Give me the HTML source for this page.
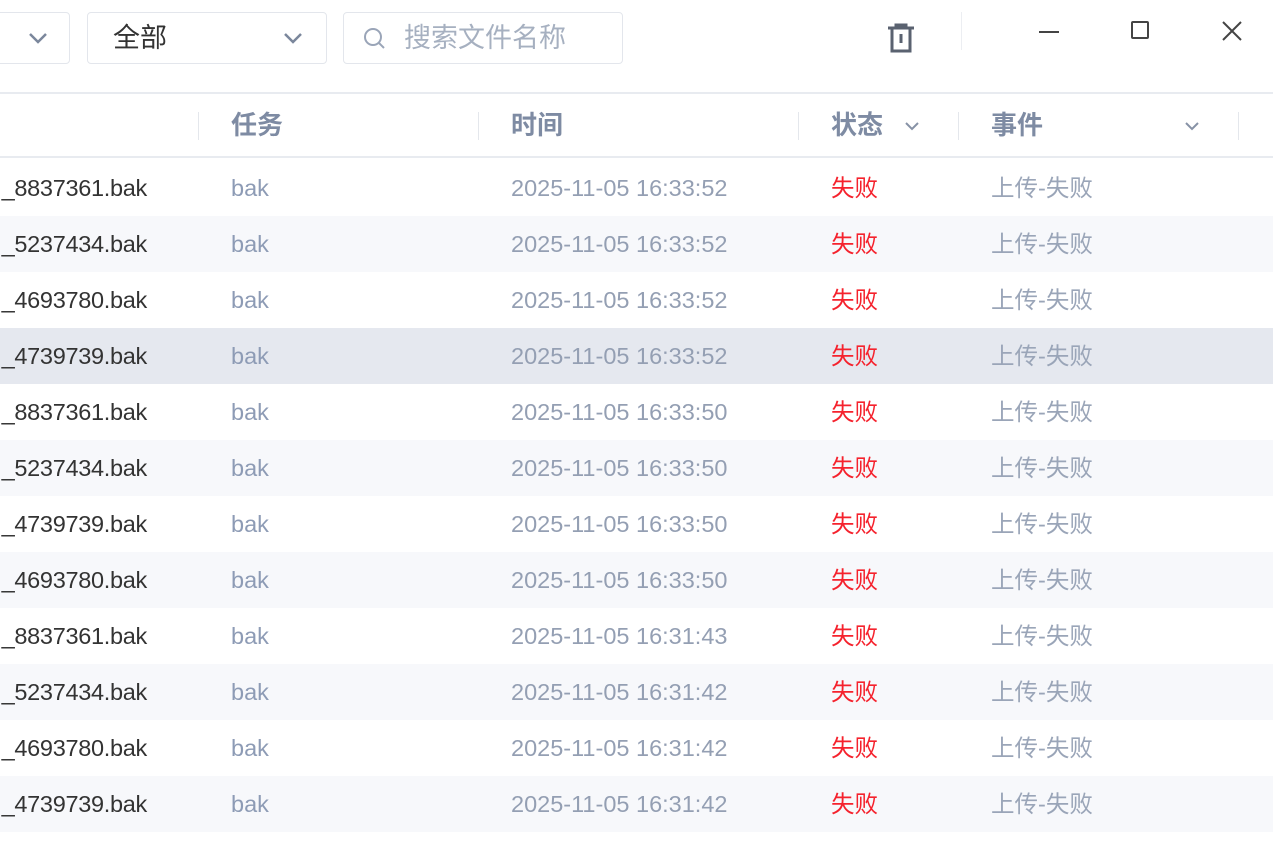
<!DOCTYPE html>
<html><head><meta charset="utf-8"><style>
body{margin:0;width:1273px;height:846px;overflow:hidden;background:#fff;font-family:"Liberation Sans","Noto Sans CJK SC",sans-serif;position:relative}
.abs{position:absolute}
.box{position:absolute;top:12px;height:52px;border:1px solid #e3e6ec;border-radius:4px;box-sizing:border-box;background:#fff}
.hdr{position:absolute;top:92px;left:0;width:1273px;height:66px;border-top:2px solid #e8ebf0;border-bottom:2px solid #e8ebf0;box-sizing:border-box}
.hdr span{position:absolute;top:0;line-height:62px;font-size:26px;font-weight:bold;color:#7e8ba3}
.sep{position:absolute;top:18px;width:1px;height:28px;background:#e4e7ec}
.row{position:absolute;left:0;width:1273px;height:56px;font-size:23.5px;line-height:56px}
.row span{position:absolute;top:0;white-space:nowrap}
.f{right:1126px;color:#333;letter-spacing:-0.3px}
.t{left:231px;color:#8d9bb5}
.d{left:511px;color:#949fb3}
.s{left:831px;color:#f5222d}
.e{left:991px;color:#9aa5b8}
</style></head><body>
<div class="box" style="left:-10px;width:80px"><svg class="abs" style="left:36px;top:18px" width="22" height="14" viewBox="0 0 22 14"><path d="M3 3l8 8 8-8" fill="none" stroke="#7b879c" stroke-width="2.5"/></svg></div>
<div class="box" style="left:87px;width:240px"><span class="abs" style="left:25px;top:0;line-height:50px;font-size:27px;color:#333">全部</span><svg class="abs" style="left:194px;top:18px" width="22" height="14" viewBox="0 0 22 14"><path d="M3 3l8 8 8-8" fill="none" stroke="#7b879c" stroke-width="2.5"/></svg></div>
<div class="box" style="left:343px;width:280px"><svg class="abs" style="left:18px;top:13px" width="26" height="26" viewBox="0 0 26 26"><circle cx="11" cy="11" r="8" fill="none" stroke="#9aa5b8" stroke-width="2"/><path d="M17 17l5 5" stroke="#9aa5b8" stroke-width="2"/></svg><span class="abs" style="left:60px;top:0;line-height:50px;font-size:27px;color:#a6b0c0">搜索文件名称</span></div>
<svg class="abs" style="left:884px;top:22px" width="34" height="34" viewBox="0 0 34 34"><path d="M4 6h26M12 6V3h10v3M8 6v23h18V6M17 12v9" fill="none" stroke="#5a6270" stroke-width="3"/></svg>
<div class="abs" style="left:961px;top:12px;width:1px;height:38px;background:#eceef2"></div>
<div class="abs" style="left:1039px;top:31px;width:20px;height:2px;background:#444"></div>
<div class="abs" style="left:1131px;top:21px;width:18px;height:18px;border:2px solid #444;border-radius:2px;box-sizing:border-box"></div>
<svg class="abs" style="left:1221px;top:20px" width="22" height="22" viewBox="0 0 22 22"><path d="M2 2l18 18M20 2L2 20" stroke="#444" stroke-width="2"/></svg>
<div class="hdr">
<div class="sep" style="left:198px"></div><span style="left:231px">任务</span>
<div class="sep" style="left:478px"></div><span style="left:511px">时间</span>
<div class="sep" style="left:798px"></div><span style="left:831px">状态</span>
<svg class="abs" style="left:904px;top:27px" width="16" height="10" viewBox="0 0 16 10"><path d="M2 2l6 6 6-6" fill="none" stroke="#8792a6" stroke-width="2"/></svg>
<div class="sep" style="left:958px"></div><span style="left:991px">事件</span>
<svg class="abs" style="left:1184px;top:27px" width="16" height="10" viewBox="0 0 16 10"><path d="M2 2l6 6 6-6" fill="none" stroke="#8792a6" stroke-width="2"/></svg>
<div class="sep" style="left:1238px"></div>
</div>
<div class="row" style="top:160px"><span class="f">_8837361.bak</span><span class="t">bak</span><span class="d">2025-11-05 16:33:52</span><span class="s">失败</span><span class="e">上传-失败</span></div>
<div class="row" style="top:216px;background:#f7f8fb"><span class="f">_5237434.bak</span><span class="t">bak</span><span class="d">2025-11-05 16:33:52</span><span class="s">失败</span><span class="e">上传-失败</span></div>
<div class="row" style="top:272px"><span class="f">_4693780.bak</span><span class="t">bak</span><span class="d">2025-11-05 16:33:52</span><span class="s">失败</span><span class="e">上传-失败</span></div>
<div class="row" style="top:328px;background:#e5e8ef"><span class="f">_4739739.bak</span><span class="t">bak</span><span class="d">2025-11-05 16:33:52</span><span class="s">失败</span><span class="e">上传-失败</span></div>
<div class="row" style="top:384px"><span class="f">_8837361.bak</span><span class="t">bak</span><span class="d">2025-11-05 16:33:50</span><span class="s">失败</span><span class="e">上传-失败</span></div>
<div class="row" style="top:440px;background:#f7f8fb"><span class="f">_5237434.bak</span><span class="t">bak</span><span class="d">2025-11-05 16:33:50</span><span class="s">失败</span><span class="e">上传-失败</span></div>
<div class="row" style="top:496px"><span class="f">_4739739.bak</span><span class="t">bak</span><span class="d">2025-11-05 16:33:50</span><span class="s">失败</span><span class="e">上传-失败</span></div>
<div class="row" style="top:552px;background:#f7f8fb"><span class="f">_4693780.bak</span><span class="t">bak</span><span class="d">2025-11-05 16:33:50</span><span class="s">失败</span><span class="e">上传-失败</span></div>
<div class="row" style="top:608px"><span class="f">_8837361.bak</span><span class="t">bak</span><span class="d">2025-11-05 16:31:43</span><span class="s">失败</span><span class="e">上传-失败</span></div>
<div class="row" style="top:664px;background:#f7f8fb"><span class="f">_5237434.bak</span><span class="t">bak</span><span class="d">2025-11-05 16:31:42</span><span class="s">失败</span><span class="e">上传-失败</span></div>
<div class="row" style="top:720px"><span class="f">_4693780.bak</span><span class="t">bak</span><span class="d">2025-11-05 16:31:42</span><span class="s">失败</span><span class="e">上传-失败</span></div>
<div class="row" style="top:776px;background:#f7f8fb"><span class="f">_4739739.bak</span><span class="t">bak</span><span class="d">2025-11-05 16:31:42</span><span class="s">失败</span><span class="e">上传-失败</span></div>
</body></html>
